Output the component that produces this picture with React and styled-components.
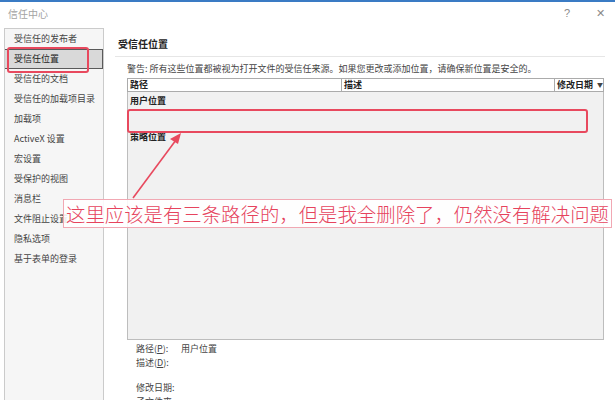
import React from 'react';
import styled, { createGlobalStyle } from 'styled-components';

const GlobalStyle = createGlobalStyle`
	body {
		margin: 0;
		background: #fff;
		font-family: "Noto Sans CJK SC", "Noto Sans", sans-serif;
	}
`;

const Window = styled.div`
	position: relative;
	width: 615px;
	height: 400px;
	overflow: hidden;
	background: #fff;
	border-top: 2px solid #3a7bc4;
	box-sizing: border-box;
`;

const TitleBar = styled.div`
	display: flex;
	align-items: center;
	justify-content: space-between;
	height: 22px;
	padding: 0 8px;
	font-size: 10px;
	color: #a3a3a3;
`;

const Controls = styled.div`
	display: flex;
	gap: 26px;
	font-family: "Liberation Sans", sans-serif;
	font-size: 11px;
	color: #8a8a8a;
	padding-right: 2px;
`;

const Body = styled.div`
	display: flex;
	padding: 4px 0 0 4px;
`;

const Sidebar = styled.div`
	width: 100px;
	height: 390px;
	box-sizing: border-box;
	border: 1px solid #cbcbcb;
	background: #f6f6f6;
	flex-shrink: 0;
`;

const NavItem = styled.div`
	height: 20px;
	line-height: 18px;
	box-sizing: border-box;
	padding-left: 9px;
	font-size: 9px;
	color: ${(p) => (p.$active ? '#222' : '#444')};
	background: ${(p) => (p.$active ? '#d9d9d9' : 'transparent')};
	border: 1px solid ${(p) => (p.$active ? '#5a5a5a' : 'transparent')};
	border-left: none;
	white-space: nowrap;
	overflow: hidden;
`;

const Content = styled.div`
	flex: 1;
	min-width: 0;
	padding: 0 10px 0 14px;
`;

const Heading = styled.div`
	padding-top: 9px;
	line-height: 14px;
	font-size: 10px;
	font-weight: 700;
	color: #222;
`;

const Divider = styled.div`
	height: 1px;
	margin: 5px 0 0 -3px;
	background: #e6e6e6;
`;

const Warning = styled.div`
	margin: 6px 0 0 9px;
	line-height: 12px;
	font-size: 9px;
	color: #444;
	white-space: nowrap;
`;

const Table = styled.div`
	margin: 3px 1px 0 9px;
`;

const HeaderRow = styled.div`
	display: grid;
	grid-template-columns: 213px 213px minmax(0, 1fr);
	grid-template-rows: 12px;
	height: 14px;
	box-sizing: border-box;
	border: 1px solid #ababab;
	background: #fff;
	overflow: hidden;
`;

const HeaderCell = styled.div`
	display: flex;
	align-items: center;
	gap: 4px;
	padding-left: 2px;
	height: 12px;
	line-height: 12px;
	font-size: 9px;
	font-weight: 700;
	color: #222;
	white-space: nowrap;
	overflow: hidden;
	border-left: ${(p) => (p.$first ? 'none' : '1px solid #ababab')};
`;

const Caret = styled.span`
	font-size: 6px;
	color: #444;
`;

const TableBody = styled.div`
	height: 248px;
	box-sizing: border-box;
	background: #f1f1f1;
	border: 1px solid #bdbdbd;
	border-top: none;
	padding-top: 2px;
`;

const GroupLabel = styled.div`
	height: 14px;
	line-height: 14px;
	padding-left: 2px;
	font-size: 9px;
	font-weight: 700;
	color: #222;
`;

const GroupRows = styled.div`
	height: ${(p) => p.$height}px;
`;

const Details = styled.div`
	margin: 2px 0 0 18px;
`;

const DetailRow = styled.div`
	display: flex;
	height: 14px;
	line-height: 14px;
	font-size: 9px;
	color: #444;
	margin-top: ${(p) => p.$gap || 0}px;
`;

const DetailLabel = styled.span`
	width: 45px;
	u {
		text-decoration: underline;
	}
`;

const Highlight = styled.div`
	position: absolute;
	box-sizing: border-box;
	border: 2px solid #e8495e;
	border-radius: 3px;
	pointer-events: none;
`;

const Arrow = styled.svg`
	position: absolute;
	left: 0;
	top: 0;
	pointer-events: none;
`;

const Callout = styled.div`
	position: absolute;
	left: 63px;
	top: 197px;
	width: 549px;
	height: 29px;
	box-sizing: border-box;
	border: 1px solid #f1a8b3;
	background: rgba(255, 255, 255, 0.88);
	display: flex;
	align-items: center;
	padding-left: 2px;
	font-size: 19.4px;
	font-weight: 300;
	color: #e6435d;
	white-space: nowrap;
`;

const navItems = [
	'受信任的发布者',
	'受信任位置',
	'受信任的文档',
	'受信任的加载项目录',
	'加载项',
	'ActiveX 设置',
	'宏设置',
	'受保护的视图',
	'消息栏',
	'文件阻止设置',
	'隐私选项',
	'基于表单的登录',
];

export default function App() {
	return (
		<>
			<GlobalStyle />
			<Window>
				<TitleBar>
					<span>信任中心</span>
					<Controls>
						<span>?</span>
						<span>✕</span>
					</Controls>
				</TitleBar>
				<Body>
					<Sidebar>
						{navItems.map((item) => (
							<NavItem key={item} $active={item === '受信任位置'}>
								{item}
							</NavItem>
						))}
					</Sidebar>
					<Content>
						<Heading>受信任位置</Heading>
						<Divider />
						<Warning>
							警告: 所有这些位置都被视为打开文件的受信任来源。如果您更改或添加位置，请确保新位置是安全的。
						</Warning>
						<Table>
							<HeaderRow>
								<HeaderCell $first>路径</HeaderCell>
								<HeaderCell>描述</HeaderCell>
								<HeaderCell>
									修改日期<Caret>▼</Caret>
								</HeaderCell>
							</HeaderRow>
							<TableBody>
								<GroupLabel>用户位置</GroupLabel>
								<GroupRows $height={22} />
								<GroupLabel>策略位置</GroupLabel>
							</TableBody>
						</Table>
						<Details>
							<DetailRow>
								<DetailLabel>
									路径(<u>P</u>):
								</DetailLabel>
								<span>用户位置</span>
							</DetailRow>
							<DetailRow>
								<DetailLabel>
									描述(<u>D</u>):
								</DetailLabel>
							</DetailRow>
							<DetailRow $gap={11}>
								<DetailLabel>修改日期:</DetailLabel>
							</DetailRow>
							<DetailRow>
								<DetailLabel>子文件夹:</DetailLabel>
							</DetailRow>
						</Details>
					</Content>
				</Body>

				{/* 标注 */}
				<Highlight style={{ left: 7, top: 45, width: 82, height: 26 }} />
				<Highlight style={{ left: 127, top: 107, width: 461, height: 24 }} />
				<Arrow width="615" height="400" viewBox="0 0 615 400">
					<line x1="133" y1="196" x2="176" y2="138" stroke="#e8495e" strokeWidth="1.6" />
					<polygon points="181,131 170,137 178,142" fill="#e8495e" />
				</Arrow>
				<Callout>这里应该是有三条路径的，但是我全删除了，仍然没有解决问题</Callout>
			</Window>
		</>
	);
}
